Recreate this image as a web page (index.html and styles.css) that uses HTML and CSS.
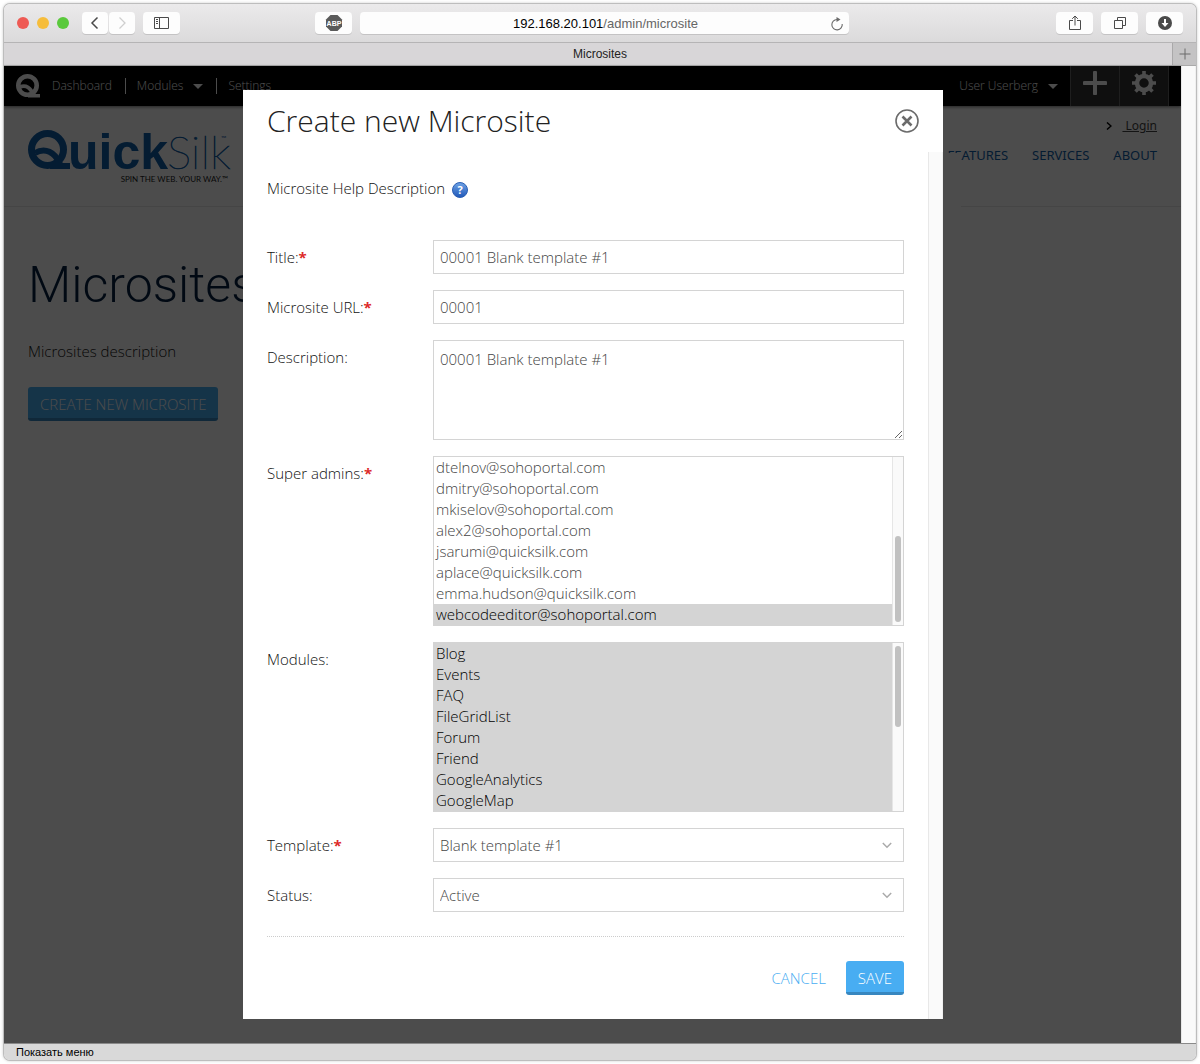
FILE: index.html
```html
<!DOCTYPE html>
<html lang="en">
<head>
<meta charset="utf-8">
<title>Microsites</title>
<link rel="stylesheet" href="styles.css">
</head>
<body>
<div class="browser">
  <div class="toolbar">
    <div class="tool-left">
      <span class="lights"><i class="red"></i><i class="yellow"></i><i class="green"></i></span>
      <span class="history">
        <button class="tool small" aria-label="Back"><svg width="10" height="14" viewBox="0 0 10 14"><path d="M7.5 1.5 2 7l5.500 5.500" fill="none" stroke="#4a4a4a" stroke-width="1.500"/></svg></button>
        <button class="tool small" aria-label="Forward"><svg width="10" height="14" viewBox="0 0 10 14"><path d="M2.500 1.500 8 7l-5.500 5.500" fill="none" stroke="#cfcfcf" stroke-width="1.300"/></svg></button>
      </span>
      <button class="tool" aria-label="Sidebar"><svg width="15" height="12" viewBox="0 0 15 12"><path d="M.5.5h14v11H.5zM5.500.5v11M2 2.500h2M2 4.500h2M2 6.500h2" fill="none" stroke="#4a4a4a"/></svg></button>
    </div>
    <div class="tool-center">
      <button class="tool" aria-label="Ad blocker"><svg width="18" height="18" viewBox="0 0 18 18"><path d="M5.500 1h7L17 5.500v7L12.500 17h-7L1 12.500v-7z" fill="#5a5a5a"/><text x="9" y="11.500" text-anchor="middle" class="abp">ABP</text></svg></button>
      <div class="address"><span class="url"><b>192.168.20.101</b>/admin/microsite</span>
        <button class="reload" aria-label="Reload"><svg width="14" height="14" viewBox="0 0 14 14"><path d="M12.200 7A5.200 5.200 0 1 1 7 2.500" fill="none" stroke="#6a6a6a" stroke-width="1.100"/><path d="M6.500 0 10.500 2.600 6.500 5z" fill="#6a6a6a"/></svg></button>
      </div>
    </div>
    <div class="tool-right">
      <button class="tool" aria-label="Share"><svg width="12" height="16" viewBox="0 0 12 16"><path d="M4 5.500H.5v9h11v-9H8M6 10.500V1M3.200 3.800 6 1l2.800 2.800" fill="none" stroke="#4a4a4a"/></svg></button>
      <button class="tool" aria-label="Show tabs"><svg width="12" height="12" viewBox="0 0 12 12"><path d="M.5 3.500h8v8h-8zM3.500 3.500v-3h8v8h-3" fill="none" stroke="#4a4a4a"/></svg></button>
      <button class="tool" aria-label="Downloads"><svg width="14" height="14" viewBox="0 0 14 14"><circle cx="7" cy="7" r="7" fill="#4a4a4a"/><path d="M7 3v6" stroke="#fff" stroke-width="2"/><path d="M3.500 7h7L7 11z" fill="#fff"/></svg></button>
    </div>
  </div>
  <div class="tabs">
    <span class="tab">Microsites</span>
    <button class="newtab" aria-label="New tab"><svg width="12" height="12" viewBox="0 0 12 12"><path d="M6 .5v11M.5 6h11" stroke="#6a6a6a" fill="none"/></svg></button>
  </div>

  <div class="viewport">
    <div class="site">
      <header class="adminbar">
        <svg class="q" width="24" height="24" viewBox="0 0 24 24"><circle cx="11.500" cy="11.500" r="9.200" fill="none" stroke="#fff" stroke-width="4.600"/><path d="M4 13c6-2.500 11 1 13 7.500M12 21.700h12.500" fill="none" stroke="#fff" stroke-width="3.600"/></svg>
        <nav class="adminnav">
          <a href="#">Dashboard</a>
          <a href="#">Modules<i class="caret"></i></a>
          <a href="#">Settings</a>
        </nav>
        <a class="user" href="#">User Userberg<i class="caret"></i></a>
        <button class="square" aria-label="Add"><svg width="24" height="24" viewBox="0 0 24 24"><path d="M12 1.500v21M1.500 12h21" stroke="#fff" stroke-width="4" stroke-linecap="round"/></svg></button>
        <button class="square" aria-label="Settings"><svg width="24" height="24" viewBox="0 0 24 24"><circle cx="12" cy="12" r="7" fill="none" stroke="#fff" stroke-width="4.500"/><g stroke="#fff" stroke-width="3.600"><path d="M12 0v4M12 20v4M0 12h4M20 12h4M3.500 3.500l3 3M17.500 17.500l3 3M20.500 3.500l-3 3M6.500 17.500l-3 3"/></g></svg></button>
      </header>
      <div class="masthead">
        <svg class="logo" width="204" height="74" viewBox="0 -14 204 74" role="img" aria-label="QuickSilk">
          <circle cx="19.500" cy="19.500" r="16" fill="none" stroke="#0f5ea8" stroke-width="7"/>
          <path d="M7 23c10-6 20-1 25 11M22 36h20" fill="none" stroke="#0f5ea8" stroke-width="6"/>
          <text x="40" y="39" class="logo-bold">uick</text>
          <text x="139" y="39" class="logo-thin">Silk</text>
          <text x="193" y="11" class="logo-tm">™</text>
          <text x="200" y="52" text-anchor="end" class="logo-tag">SPIN THE WEB. YOUR WAY.™</text>
        </svg>
        <div class="masthead-links">
          <div class="login"><svg width="6" height="8" viewBox="0 0 6 8"><path d="M1 .5 5 4 1 7.500" fill="none" stroke="#000" stroke-width="1.500"/></svg><a href="#">&nbsp;Login</a></div>
          <nav class="mainnav"><a href="#">FEATURES</a><a href="#">SERVICES</a><a href="#">ABOUT</a></nav>
        </div>
      </div>
      <main class="content">
        <h1>Microsites</h1>
        <p>Microsites description</p>
        <button class="btn">CREATE NEW MICROSITE</button>
      </main>
    </div>

    <div class="overlay">
      <form class="modal" onsubmit="return false">
        <div class="modal-head">
          <h2>Create new Microsite</h2>
          <button type="button" class="close" aria-label="Close"><svg width="24" height="24" viewBox="0 0 24 24"><circle cx="12" cy="12" r="11" fill="none" stroke="#6b6b6b" stroke-width="1.600"/><path d="M7.500 7.500l9 9M16.500 7.500l-9 9" stroke="#6b6b6b" stroke-width="2.600"/></svg></button>
        </div>
        <div class="modal-scroll">
          <div class="modal-body">
            <p class="help">Microsite Help Description
              <svg width="16" height="16" viewBox="0 0 16 16"><defs><linearGradient id="ball" x1="0" y1="0" x2="0" y2="1"><stop offset="0" stop-color="#6ea3e6"/><stop offset="1" stop-color="#1f57b8"/></linearGradient></defs><circle cx="8" cy="8" r="7.500" fill="url(#ball)" stroke="#2c5fb3"/><text x="8" y="12" text-anchor="middle" class="mark">?</text></svg>
            </p>
            <div class="fields">
              <label for="title">Title:<b>*</b></label>
              <input id="title" type="text" value="00001 Blank template #1">
              <label for="url">Microsite URL:<b>*</b></label>
              <input id="url" type="text" value="00001">
              <label for="description">Description:</label>
              <textarea id="description">00001 Blank template #1</textarea>
              <label for="admins">Super admins:<b>*</b></label>
              <span class="list">
                <select id="admins" multiple>
                  <option>admin@sohoportal.com</option>
                  <option>support@sohoportal.com</option>
                  <option>editor@sohoportal.com</option>
                  <option>manager@sohoportal.com</option>
                  <option>info@quicksilk.com</option>
                  <option>sales@quicksilk.com</option>
                  <option>alex@sohoportal.com</option>
                  <option>dtelnov@sohoportal.com</option>
                  <option>dmitry@sohoportal.com</option>
                  <option>mkiselov@sohoportal.com</option>
                  <option>alex2@sohoportal.com</option>
                  <option>jsarumi@quicksilk.com</option>
                  <option>aplace@quicksilk.com</option>
                  <option>emma.hudson@quicksilk.com</option>
                  <option selected>webcodeeditor@sohoportal.com</option>
                </select>
                <span class="rail at-end"><i></i></span>
              </span>
              <label for="modules">Modules:</label>
              <span class="list">
                <select id="modules" multiple>
                  <option selected>Blog</option>
                  <option selected>Events</option>
                  <option selected>FAQ</option>
                  <option selected>FileGridList</option>
                  <option selected>Forum</option>
                  <option selected>Friend</option>
                  <option selected>GoogleAnalytics</option>
                  <option selected>GoogleMap</option>
                  <option selected>Media</option>
                  <option selected>Menu</option>
                  <option selected>News</option>
                  <option selected>Page</option>
                  <option selected>Poll</option>
                  <option selected>Search</option>
                  <option selected>Slider</option>
                  <option selected>Users</option>
                </select>
                <span class="rail"><i></i></span>
              </span>
              <label for="template">Template:<b>*</b></label>
              <span class="pick"><select id="template"><option>Blank template #1</option></select><svg width="10" height="7" viewBox="0 0 10 7"><path d="M.8 1 5 5.200 9.200 1" fill="none" stroke="#aaa" stroke-width="1.500"/></svg></span>
              <label for="status">Status:</label>
              <span class="pick"><select id="status"><option>Active</option></select><svg width="10" height="7" viewBox="0 0 10 7"><path d="M.8 1 5 5.200 9.200 1" fill="none" stroke="#aaa" stroke-width="1.500"/></svg></span>
            </div>
            <div class="actions">
              <a href="#">CANCEL</a>
              <button class="btn">SAVE</button>
            </div>
          </div>
          <div class="track"></div>
        </div>
      </form>
    </div>
    <div class="track page-track"></div>
  </div>
  <footer class="status">Показать меню</footer>
</div>
</body>
</html>
```
FILE: styles.css
```css
* { box-sizing: border-box; }
body {
  margin: 0;
  padding: 4px;
  background: #fff;
  font: 300 15px/20px "Open Sans", sans-serif;
  color: #111;
}
button { font: inherit; border: 0; padding: 0; margin: 0; background: none; }
svg { display: block; }
h1, h2, p { margin: 0; font-weight: 300; }

.browser {
  display: flex;
  flex-direction: column;
  min-height: calc(100vh - 8px);
  border-radius: 6px;
  overflow: hidden;
  box-shadow: 0 0 0 1px #bdbdbd, 0 0 3px 1px #ccc;
}

/* Browser chrome */
.toolbar {
  display: grid;
  grid-template-columns: 298px minmax(0, 1fr) 334px;
  align-items: center;
  height: 39px;
  padding: 0 13px;
  border-bottom: 1px solid #b5b4b5;
  background: linear-gradient(#ebeaeb, #dbdadb);
}
.tool-left, .tool-center, .tool-right, .lights, .history { display: flex; align-items: center; }
.tool-left, .tool-center, .tool-right { gap: 8px; }
.tool-right { justify-content: flex-end; }
.lights { gap: 8px; margin-right: 5px; }
.lights i { width: 12px; height: 12px; border-radius: 50%; }
.red { background: #ee5a54; }
.yellow { background: #f6bd3b; }
.green { background: #5ac93c; }
.history { gap: 1px; }
.tool, .address {
  display: flex;
  align-items: center;
  justify-content: center;
  width: 37px;
  height: 22px;
  border-radius: 4px;
  background: #fdfdfd;
  box-shadow: 0 1px 0 #c4c3c4;
}
.tool { flex: none; }
.tool.small { width: 26px; }
.abp { font: 700 7px "Liberation Sans", sans-serif; fill: #fff; }
.address { flex: 1; width: auto; padding: 1px 5px 0 21px; font: 13px/22px "Liberation Sans", Arial, sans-serif; color: #666; }
.url { flex: 1; text-align: center; }
.url b { font-weight: 400; color: #000; }
.tabs {
  display: flex;
  height: 23px;
  border-bottom: 1px solid #aaa;
  background: #d8d6d8;
  font: 12px/22px "Liberation Sans", Arial, sans-serif;
  color: #222;
}
.tab { flex: 1; padding-left: 24px; text-align: center; }
.newtab {
  display: flex;
  align-items: center;
  justify-content: center;
  width: 24px;
  border-left: 1px solid #a9a8a9;
  background: #c4c3c4;
}
.status {
  height: 17px;
  padding-left: 12px;
  border-top: 1px solid #8a8a8a;
  background: #d9d9d9;
  font: 11px/16px "Liberation Sans", Arial, sans-serif;
  color: #000;
}

/* Page and overlay share one grid cell */
.viewport {
  flex: 1;
  display: grid;
  grid-template-columns: minmax(0, 1fr) 15px;
}
.site, .overlay { grid-area: 1 / 1; }
.site { background: #fff; }
.overlay { padding: 24px 0 24px 1px; background: rgba(0, 0, 0, .7); z-index: 1; }
.track { width: 15px; border-left: 1px solid #e8e8e8; border-right: 1px solid #f0f0f0; background: #fafafa; }
.page-track { grid-area: 1 / 2; }

.adminbar {
  display: flex;
  align-items: center;
  height: 40px;
  padding: 0 12px;
  background: #000;
  box-shadow: 0 1px 3px #777;
  font-size: 12px;
}
.adminbar a { color: #fff; text-decoration: none; }
.adminnav { display: flex; flex: 1; line-height: 16px; }
.adminnav a { padding: 0 13px 0 11px; border-right: 1px solid #fff; }
.adminnav a:first-child { padding-left: 12px; }
.adminnav a:last-child { border: 0; }
.caret {
  display: inline-block;
  margin-left: 10px;
  vertical-align: middle;
  border: 5px solid transparent;
  border-top-color: #fff;
  border-bottom: 0;
}
.user { margin-right: 12px; }
.square {
  display: flex;
  justify-content: center;
  align-self: stretch;
  width: 49px;
  padding-top: 5px;
  border-left: 1px solid #666;
  background: #333;
}
.square:last-child { width: 50px; border-right: 1px solid #666; }

.masthead {
  display: flex;
  justify-content: space-between;
  height: 101px;
  padding: 10px 24px 0;
  border-bottom: 1px solid #e8e8e8;
}
.logo-bold { font: 700 50px "Liberation Sans", Arial, sans-serif; fill: #0f5ea8; }
.logo-thin { font: 100 46px Lato, sans-serif; fill: #0f5ea8; stroke: #0f5ea8; stroke-width: .6px; }
.logo-tm { font: 400 7px Lato, sans-serif; fill: #0f5ea8; }
.logo-tag { font: 400 8px Lato, sans-serif; fill: #222; }
.masthead-links { display: flex; flex-direction: column; align-items: flex-end; gap: 9px; font: 400 13px/20px "Noto Sans", sans-serif; }
.login { display: flex; align-items: center; gap: 10px; font-size: 12px; }
.login a { color: #444; }
.mainnav { display: flex; gap: 24px; }
.mainnav a { color: #0f5ea8; text-decoration: none; }

.content { padding: 46px 24px; }
.content h1 { font: 300 50px/64px Roboto, sans-serif; color: #062040; }
.content p { margin: 24px 0 26px; }
.btn {
  height: 34px;
  padding: 2px 12px 0;
  border-bottom: 3px solid #3787c0;
  border-radius: 3px;
  background: #48adf2;
  color: #fff;
}

/* Dialog */
.modal {
  position: relative;
  width: 700px;
  max-width: 100%;
  margin: 0 auto;
  background: #fff;
}
.modal::after {
  content: "";
  position: absolute;
  top: 63px;
  bottom: 0;
  left: 100%;
  width: 18px;
  background: #4c4c4c;
}
.modal-head {
  display: flex;
  align-items: center;
  justify-content: space-between;
  height: 62px;
  padding: 0 24px;
}
.modal-head h2 { font-size: 30px; line-height: 40px; color: #222; }
.modal-scroll { display: flex; }
.modal-body { flex: 1; min-width: 0; padding: 24px; }
.help { display: flex; align-items: center; gap: 7px; height: 24px; margin-bottom: 40px; }
.help svg { margin-top: 3px; }
.mark { font: 700 11px "Open Sans", sans-serif; fill: #fff; }
.fields {
  display: grid;
  grid-template-columns: 150px minmax(0, 1fr);
  gap: 16px;
  padding-bottom: 24px;
  border-bottom: 1px dotted #ccc;
}
.fields label { line-height: 34px; }
.fields label b { color: #dd2a2a; font-weight: 700; }
.fields input, .fields textarea, .fields select {
  display: block;
  width: 100%;
  height: 34px;
  margin: 0;
  padding: 0 6px;
  border: 1px solid #d4d4d4;
  border-radius: 0;
  outline: 0;
  background: #fff;
  color: #444;
  font: inherit;
  appearance: none;
}
.fields textarea { height: 100px; padding: 8px 6px; }
.list, .pick { display: grid; align-items: center; }
.list > *, .pick > * { grid-area: 1 / 1; }
.fields select[multiple] { height: 170px; padding: 0; overflow-y: scroll; scrollbar-width: none; }
.fields option { height: 21px; min-height: 21px; padding: 0 2px; font-weight: 300; line-height: 21px; }
.fields select[multiple] option:checked { background: #d4d4d4 linear-gradient(#d4d4d4, #d4d4d4); color: #000; }
.rail {
  display: flex;
  flex-direction: column;
  align-self: stretch;
  justify-self: end;
  width: 11px;
  margin: 1px;
  padding: 3px 2px;
  border-left: 1px solid #e6e6e6;
  background: #fafafa;
  pointer-events: none;
}
.rail i { width: 6px; height: 50%; border-radius: 3px; background: #c1c1c1; }
.rail.at-end { justify-content: flex-end; }
.rail.at-end i { height: 53%; }
.pick svg { justify-self: end; margin-right: 12px; }
.actions { display: flex; align-items: center; justify-content: flex-end; gap: 20px; padding-top: 24px; }
.actions a { color: #48adf2; text-decoration: none; }
```
